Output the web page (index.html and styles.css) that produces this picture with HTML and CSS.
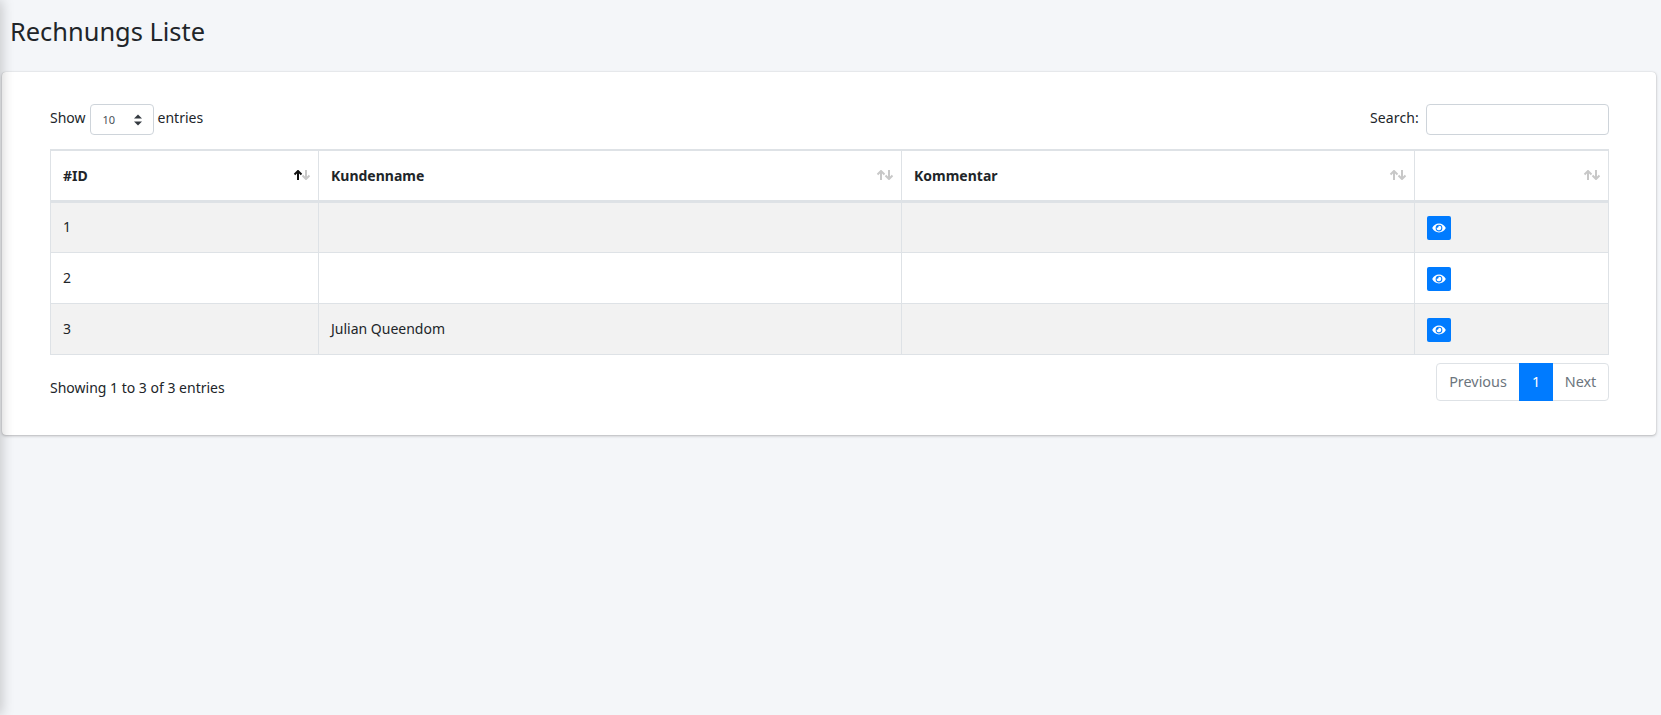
FILE: index.html
```html
<!DOCTYPE html>
<html lang="de">
<head>
<meta charset="utf-8">
<title>Rechnungs Liste</title>
<link rel="stylesheet" href="styles.css">
</head>
<body>
<div class="edge-shadow"></div>
<main class="content">
  <h1 class="page-title">Rechnungs Liste</h1>
  <section class="card">
    <div class="toolbar">
      <label class="length">Show
        <span class="select"><span class="select-value">10</span>
          <svg class="select-arrows" viewBox="0 0 8 12" width="8" height="12"><path d="M4 0.5 8 4.600H0zM4 11.500 0 7.400H8z"/></svg>
        </span>
        entries</label>
      <label class="search">Search: <input class="search-input" type="text"></label>
    </div>
    <table class="data-table">
      <thead>
        <tr>
          <th class="col-id">#ID<svg class="sort" viewBox="0 0 18 10" width="18" height="10"><path class="arrow" d="M13 0V9M9.500 5.500 13 9 16.500 5.500"/><path class="arrow active" d="M5 10V1M1.500 4.500 5 1 8.500 4.500"/></svg></th>
          <th class="col-name">Kundenname<svg class="sort" viewBox="0 0 18 10" width="18" height="10"><path class="arrow" d="M13 0V9M9.500 5.500 13 9 16.500 5.500"/><path class="arrow" d="M5 10V1M1.500 4.500 5 1 8.500 4.500"/></svg></th>
          <th class="col-comment">Kommentar<svg class="sort" viewBox="0 0 18 10" width="18" height="10"><path class="arrow" d="M13 0V9M9.500 5.500 13 9 16.500 5.500"/><path class="arrow" d="M5 10V1M1.500 4.500 5 1 8.500 4.500"/></svg></th>
          <th class="col-action"><svg class="sort" viewBox="0 0 18 10" width="18" height="10"><path class="arrow" d="M13 0V9M9.500 5.500 13 9 16.500 5.500"/><path class="arrow" d="M5 10V1M1.500 4.500 5 1 8.500 4.500"/></svg></th>
        </tr>
      </thead>
      <tbody>
        <tr class="odd"><td>1</td><td></td><td></td><td><a class="view-btn"><svg viewBox="0 0 576 512" width="14" height="12"><path d="M572.5 241.4C518.3 135.6 410.9 64 288 64S57.7 135.600 3.500 241.400a32.400 32.400 0 0 0 0 29.200C57.700 376.400 165.100 448 288 448s230.300-71.600 284.500-177.400a32.400 32.400 0 0 0 0-29.200zM288 400a144 144 0 1 1 144-144 143.900 143.900 0 0 1-144 144zm0-240a95.300 95.300 0 0 0-25.300 3.800 47.900 47.900 0 0 1-66.900 66.900A95.800 95.800 0 1 0 288 160z"/></svg></a></td></tr>
        <tr><td>2</td><td></td><td></td><td><a class="view-btn"><svg viewBox="0 0 576 512" width="14" height="12"><path d="M572.5 241.4C518.3 135.6 410.9 64 288 64S57.7 135.600 3.500 241.400a32.400 32.400 0 0 0 0 29.200C57.700 376.400 165.100 448 288 448s230.300-71.600 284.500-177.400a32.400 32.400 0 0 0 0-29.200zM288 400a144 144 0 1 1 144-144 143.900 143.900 0 0 1-144 144zm0-240a95.300 95.300 0 0 0-25.300 3.800 47.900 47.900 0 0 1-66.900 66.900A95.800 95.800 0 1 0 288 160z"/></svg></a></td></tr>
        <tr class="odd"><td>3</td><td>Julian Queendom</td><td></td><td><a class="view-btn"><svg viewBox="0 0 576 512" width="14" height="12"><path d="M572.5 241.4C518.3 135.6 410.9 64 288 64S57.7 135.600 3.500 241.400a32.400 32.400 0 0 0 0 29.200C57.700 376.400 165.100 448 288 448s230.300-71.600 284.500-177.400a32.400 32.400 0 0 0 0-29.200zM288 400a144 144 0 1 1 144-144 143.900 143.900 0 0 1-144 144zm0-240a95.300 95.300 0 0 0-25.300 3.800 47.900 47.900 0 0 1-66.900 66.900A95.800 95.800 0 1 0 288 160z"/></svg></a></td></tr>
      </tbody>
    </table>
    <div class="footer-row">
      <div class="info">Showing 1 to 3 of 3 entries</div>
      <nav class="pagination">
        <a class="page-link">Previous</a>
        <a class="page-link current">1</a>
        <a class="page-link">Next</a>
      </nav>
    </div>
  </section>
</main>
</body>
</html>
```

FILE: styles.css
```css
* { box-sizing: border-box; }
html, body { margin: 0; height: 100%; }
body {
  background: #f4f6f9;
  color: #212529;
  font-family: "Noto Sans", "Open Sans", sans-serif;
  font-size: 14px;
  overflow: hidden;
}
.edge-shadow {
  position: fixed;
  top: 0; bottom: 0; left: -10px;
  width: 10px;
  box-shadow: 0 0 14px rgba(0,0,0,.28);
  z-index: 5;
}
.content { padding-left: 2px; padding-right: 5px; }
.page-title {
  margin: 0;
  padding: 12px 0 0 8px;
  height: 72px;
  font-size: 25.4px;
  font-weight: 400;
  line-height: 38px;
  color: #212529;
}
.card {
  background: #fff;
  border-radius: 4px;
  box-shadow: 0 0 1px rgba(0,0,0,.2), 0 1px 3px rgba(0,0,0,.25);
  padding: 32px 47px 34px 48px;
  height: 363px;
}
.toolbar { display: flex; justify-content: space-between; height: 30px; }
.length, .search { display: flex; height: 30px; align-items: flex-start; line-height: 27px; }
.length { gap: 4px; }
.select {
  display: flex; align-items: center; justify-content: space-between;
  width: 64px; height: 31px;
  border: 1px solid #ced4da; border-radius: 4px;
  padding: 0 11px 0 12px;
  background: #fff;
  font-size: 11px; color: #495057;
}
.select-arrows { fill: #343a40; }
.search { gap: 7px; letter-spacing: .15px; }
.search-input {
  width: 183px; height: 31px;
  border: 1px solid #ced4da; border-radius: 4px;
  background: #fff;
  outline: none;
}
.data-table {
  width: 1558px;
  margin-top: 15px;
  border-collapse: collapse;
  table-layout: fixed;
  border-top: 2px solid #dee2e6;
}
.data-table th, .data-table td {
  border: 1px solid #dee2e6;
  padding: 0 12px;
  text-align: left;
  vertical-align: middle;
}
.data-table th {
  position: relative;
  height: 51px;
  font-weight: 700;
  border-bottom: 3px solid #dee2e6;
  background: #fff;
}
.data-table td { height: 51px; }
.data-table tbody tr { background: #fff; }
.data-table tbody tr.odd { background: #f2f2f2; }
.data-table tbody tr:first-child td { padding-bottom: 2px; }
.col-id { width: 268px; }
.col-name { width: 583px; }
.col-comment { width: 513px; }
.col-action { width: 194px; }
.sort {
  position: absolute;
  right: 7px; top: 19px;
}
.arrow { fill: none; stroke: #c8c8c8; stroke-width: 2; }
.arrow.active { stroke: #111; }
.view-btn {
  display: flex; align-items: center; justify-content: center;
  width: 24px; height: 24px;
  margin-top: 2px;
  background: #007bff;
  border-radius: 2px;
}
.data-table tbody tr:first-child .view-btn { margin-top: 4px; }
.view-btn svg { fill: #fff; }
.footer-row {
  display: flex; justify-content: space-between; align-items: flex-start;
  margin-top: 8px;
}
.info { padding-top: 11px; line-height: 27px; }
.pagination {
  display: flex; height: 38px; width: 173px;
  border: 1px solid #dee2e6; border-radius: 4px;
  background: #fff;
  font-size: 14.4px;
}
.page-link {
  display: flex; align-items: center; justify-content: center;
  color: #6c757d;
}
.page-link:first-child { width: 82px; }
.page-link:last-child { flex: 1; }
.page-link.current {
  width: 34px; margin: -1px 0;
  background: #007bff; color: #fff;
}
```
